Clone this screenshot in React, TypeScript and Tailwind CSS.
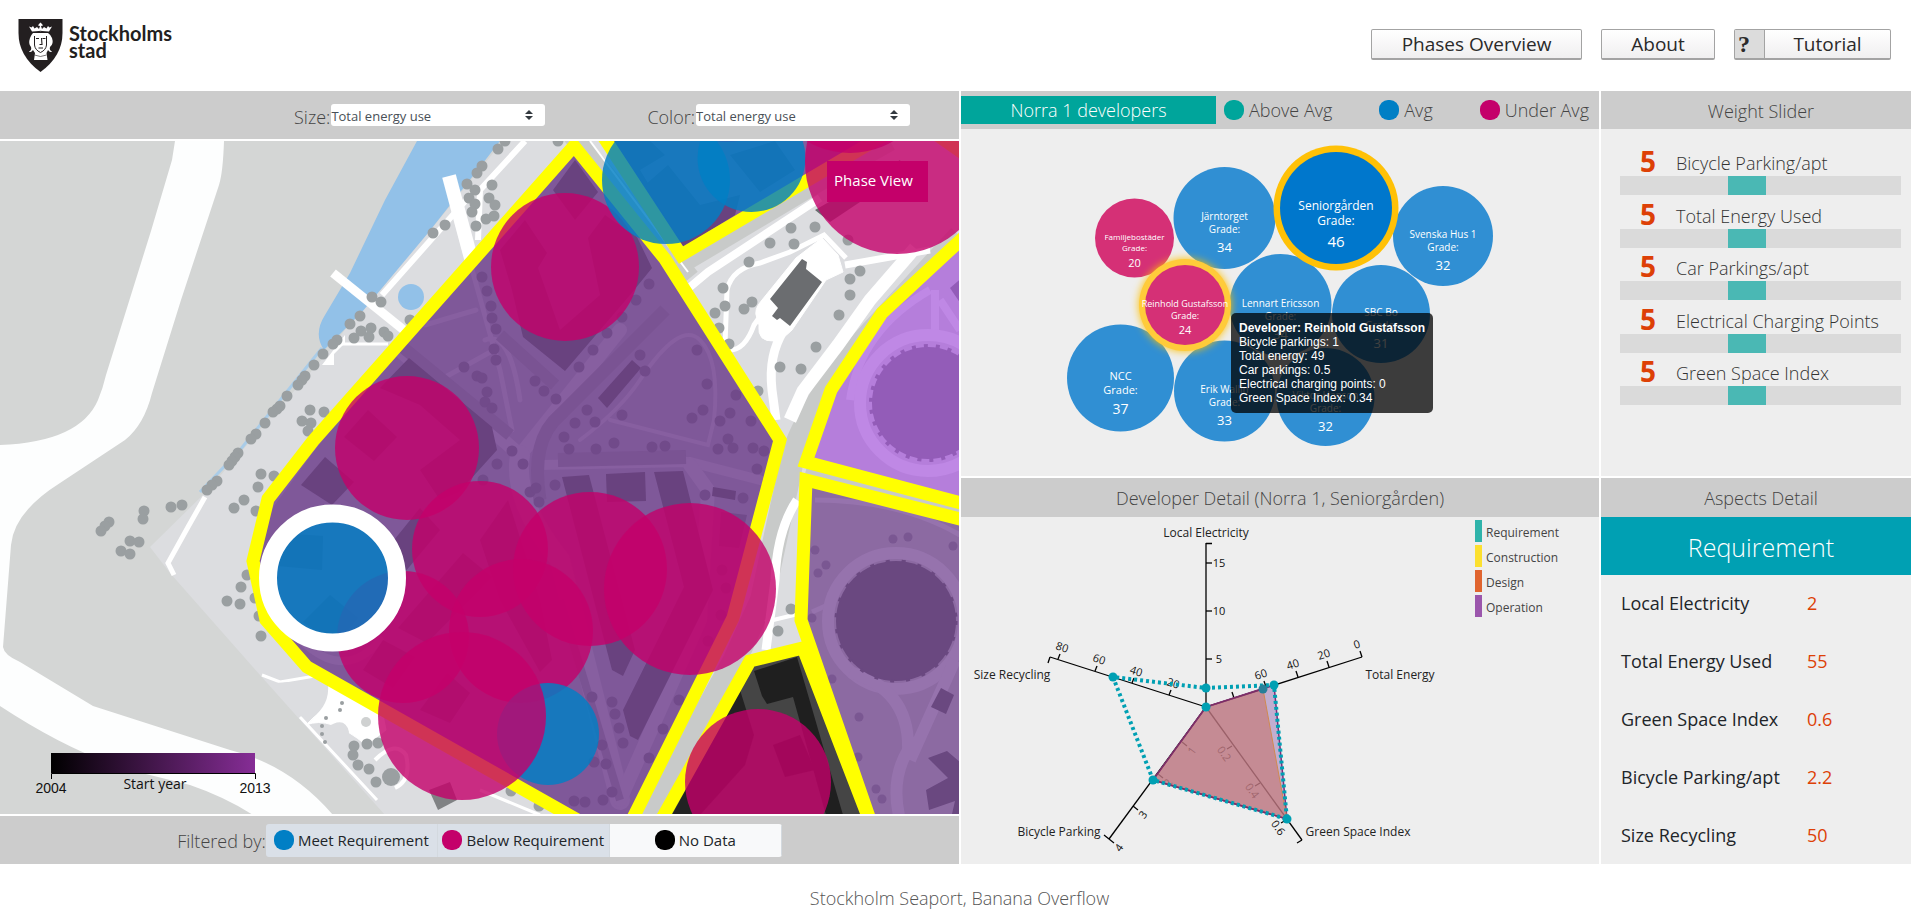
import React from "react";

const FONT = "font-['Open_Sans','Noto_Sans',sans-serif]";

type Circle = { x: number; y: number; r: number; kind: "meet" | "below" };

const mapCircles: Circle[] = [
  { x: 727, y: 70, r: 72, kind: "below" },
  { x: 565, y: 267, r: 74, kind: "below" },
  { x: 666, y: 180, r: 64, kind: "meet" },
  { x: 751.5, y: 158, r: 54, kind: "meet" },
  { x: 897, y: 162, r: 92, kind: "below" },
  { x: 850, y: 68, r: 85, kind: "below" },
  { x: 407, y: 448, r: 72, kind: "below" },
  { x: 480, y: 549, r: 68, kind: "below" },
  { x: 590, y: 569, r: 77, kind: "below" },
  { x: 690, y: 589, r: 86, kind: "below" },
  { x: 521, y: 631, r: 72, kind: "below" },
  { x: 403, y: 637, r: 66, kind: "below" },
  { x: 548, y: 734, r: 51, kind: "meet" },
  { x: 462, y: 716, r: 84, kind: "below" },
  { x: 758, y: 782, r: 73, kind: "below" },
];

const trees = [
  [505, 141], [558, 141], [498, 149], [482, 166], [477, 173], [467, 184], [475, 190], [469, 198], [475, 204], [472, 212], [492, 185], [489, 198], [495, 205],
  [486, 219], [494, 216], [476, 226], [445, 225], [433, 233], [372, 297], [381, 302], [360, 316], [350, 324], [410, 320], [354, 338], [361, 331], [371, 328],
  [369, 337], [384, 332], [388, 336], [337, 340], [333, 344], [323, 354], [314, 365], [305, 376], [302, 380], [298, 385], [287, 396], [280, 406], [277, 409],
  [273, 412], [265, 423], [256, 434], [251, 439], [238, 453], [235, 457], [232, 461], [229, 465], [217, 481], [212, 485], [207, 490], [310, 410], [324, 412],
  [302, 421], [311, 423], [308, 431], [261, 474], [274, 476], [258, 487], [244, 500], [234, 508], [256, 511], [171, 507], [182, 505], [144, 511], [143, 519],
  [109, 522], [105, 526], [101, 531], [130, 541], [139, 542], [121, 551], [130, 554], [247, 575], [241, 587], [227, 601], [240, 604], [255, 598], [259, 616],
  [261, 636], [354, 746], [353, 755], [358, 765], [369, 769], [367, 744], [378, 743], [376, 782], [511, 791], [539, 806], [791, 228], [815, 227], [770, 243],
  [794, 244], [749, 262], [723, 288], [725, 306], [715, 313], [719, 328], [729, 344], [744, 309], [752, 302], [860, 271], [850, 279], [850, 295], [839, 315],
  [816, 347], [780, 367], [801, 369], [848, 240], [791, 609], [778, 631], [758, 391],
];

const parkTrees = [
  [482, 277], [487, 291], [491, 306], [492, 318], [496, 329], [494, 349], [496, 360], [477, 376], [482, 378], [487, 392], [485, 402], [492, 408], [464, 367],
  [535, 381], [544, 391], [556, 399], [649, 284], [636, 300], [622, 317], [607, 333], [593, 350], [579, 367], [640, 355], [645, 371], [697, 350], [587, 410],
  [575, 423], [595, 422], [564, 437], [569, 449], [596, 449], [614, 443], [622, 415], [652, 447], [665, 446], [512, 451], [497, 464], [523, 464], [483, 480],
  [530, 492], [536, 488], [555, 485], [539, 502], [707, 384], [692, 418], [703, 410], [736, 395], [720, 421], [730, 413], [728, 439], [718, 449], [733, 448],
  [751, 421], [753, 448], [764, 451], [757, 469], [705, 495], [743, 498], [722, 570], [726, 588], [721, 615], [708, 641], [592, 697], [612, 702], [615, 714],
  [619, 728], [623, 743], [679, 700], [663, 729], [649, 758], [602, 745], [594, 762], [606, 764], [612, 792], [603, 800], [585, 802], [574, 801],
];

const eastTrees = [
  [815, 550], [826, 565], [818, 573], [893, 539], [908, 537], [953, 546], [812, 618], [832, 679], [859, 717], [858, 757], [876, 789], [882, 799],
];

const mainArea = "574,146 665,259 780,440 733,618 620,844 307,667 266,620 253,561 268,499 313,441";
const eastLight = "965,236 882,313 831,390 806,462 980,508 980,220";
const eastArea = "806,480 980,524 980,840 877,840 801,620";
const darkArea = "750,661 803,648 877,840 650,840";
const northArea = "586,110 681,255 930,108";

function CityMap() {
  return (
    <svg viewBox="0 141 959 673" className="block w-full" role="img" aria-label="Map of Norra 1">
      <defs>
        <linearGradient id="years" x1="0" x2="1" y1="0" y2="0">
          <stop offset="0" stopColor="#000" />
          <stop offset="1" stopColor="#862d96" />
        </linearGradient>
        <clipPath id="mainClip">
          <polygon points={mainArea} />
        </clipPath>
        <clipPath id="lightClip">
          <polygon points={eastLight} />
        </clipPath>
        <clipPath id="eastClip">
          <polygon points={eastArea} />
        </clipPath>
        <clipPath id="northClip">
          <polygon points={northArea} />
        </clipPath>
      </defs>
      <rect x="0" y="141" width="960" height="674" fill="#d4d6d5" />
      <path
        d="M175 141H224Q223 172 219 185L181 300L152 393Q144 425 125 440L60 483Q14 512 11 545L3 647Q4 655 20 662L93 706L230 750Q290 765 333 815H253Q225 797 190 785L130 770Q70 752 0 706V445Q80 442 98 400Q103 388 106 375L151 231L172 160Z"
        fill="#fdfefe"
      />
      <path d="M503 141L428 233L367 300L330 350L205 493L150 547L170 573L260 675L385 815H960V141Z" fill="#dcdde0" />
      <path d="M417 141H500L480 167L428 233L362 312L324 350Q313 334 325 315L350 273L385 200Z" fill="#92c1e8" />
      <circle cx="411" cy="297" r="13" fill="#92c1e8" />
      <path d="M322 348L240 450L200 492" fill="none" stroke="#a9cce8" strokeWidth="3" />
      <g fill="none" stroke="#fff">
        <path d="M449 176L472 262" strokeWidth="14" />
        <path d="M333 273L405 331" strokeWidth="9" />
        <path d="M525 141L480 190L478 240M475 190L382 295" strokeWidth="6" />
        <path d="M205 497L188 527L168 563L174 575" strokeWidth="5" />
        <path d="M340 344H388" strokeWidth="3" />
        <path d="M345 335L322 365H334V354L345 343Z" fill="#fff" stroke="none" />
        <path d="M262 675L280 682L315 676M300 717L377 800M480 790L540 815" strokeWidth="3" />
        <path d="M318 678Q330 680 340 690L380 700L386 730L366 745Q330 715 306 725Q330 705 326 680Z" fill="#fff" />
        <path d="M375 760Q395 740 406 755Q412 780 395 788" strokeWidth="4" />
      </g>
      <path d="M276 683Q305 680 328 684Q330 705 312 718L300 716ZM326 728Q345 715 349 732L346 748L336 746Z" fill="#dcdde0" />
      <g fill="none" stroke="#c8cac9">
        <path d="M560 120L690 278M684 262L830 175L890 141" strokeWidth="20" />
        <path d="M960 236L850 356Q795 430 790 470L762 600L735 660L645 822" strokeWidth="24" />
        <path d="M806 470L960 511" strokeWidth="8" />
      </g>
      <path d="M590 141L688 272" stroke="#fff" strokeWidth="2" />
      <g fill="none" stroke="#fff">
        <path d="M690 287L708 272L820 198" strokeWidth="8" />
        <path d="M729 352L725 345L727 290Q732 268 760 263L790 252L824 235L846 258" strokeWidth="5" />
        <path d="M730 350Q745 350 754 325L772 300" strokeWidth="5" />
        <path d="M845 265L930 250" strokeWidth="7" />
        <path d="M915 248L870 300L838 345L803 391L790 420" strokeWidth="13" />
        <path d="M784 330Q768 355 772 390L776 420" strokeWidth="9" />
        <path d="M797 500Q777 530 775 580L766 650" strokeWidth="9" />
        <path d="M765 622L798 614" strokeWidth="4" />
        <path d="M796 258L822 238L838 255L843 272L826 280L792 330Q782 340 774 341Q757 342 759 325L757 318Q753 310 762 300Z" fill="#fff" />
      </g>
      <path d="M802 259L807 262L806 269L822 282L790 326L780 318L777 320L772 316L778 308L770 299Z" fill="#6b6d70" />
      <g fill="#9a9fa1">
        {trees.map(([x, y], i) => (
          <circle key={i} cx={x} cy={y} r="5.5" />
        ))}
        <circle cx="391" cy="777" r="9" />
        <circle cx="342" cy="703" r="2" />
        <circle cx="340" cy="710" r="2" />
        <circle cx="326" cy="718" r="2" />
        <circle cx="322" cy="726" r="2" />
        <circle cx="322" cy="734" r="2" />
        <circle cx="325" cy="742" r="2" />
        <circle cx="366" cy="722" r="5" fill="#cfd1d1" />
      </g>
      <polygon points="429,790 450,782 457,800 438,810" fill="#808284" />
      <polygon points="815,210 850,190 900,160 905,172 830,222" fill="#6b6d70" />

      <polygon points={mainArea} fill="#7f5899" />
      <g clipPath="url(#mainClip)">
        <g fill="none" stroke="#875fa0" strokeLinecap="round">
          <path d="M390 342L520 455L620 330" strokeWidth="14" />
          <path d="M470 262L500 370L512 430M485 340Q510 330 520 400M425 325L476 310M440 380L494 350" strokeWidth="5" />
          <path d="M580 440Q620 410 640 380Q680 320 700 340Q720 360 714 420L708 445L610 420" strokeWidth="4" />
          <path d="M520 455Q512 500 560 560L620 800" strokeWidth="20" />
          <path d="M540 465L690 462L760 480" strokeWidth="10" />
          <path d="M690 465L708 490L700 620L620 800" strokeWidth="14" />
          <path d="M270 505L310 450L350 400M262 590Q330 700 380 640" strokeWidth="8" />
        </g>
        <g fill="none" stroke="#7a5393">
          <path d="M400 345L510 435M500 335L555 385" strokeWidth="12" />
          <path d="M665 310L560 415Q530 440 540 500" strokeWidth="13" />
          <path d="M558 460L686 457" strokeWidth="14" />
          <path d="M560 600L620 800" strokeWidth="8" />
        </g>
        <g fill="#69427f">
          <polygon points="575,160 598,192 575,220 553,190" />
          <polygon points="637,237 652,268 630,295 565,371 523,337 512,290 500,250 525,220 547,253 538,268 560,330 600,295 588,238 605,215" />
          <polygon points="409,358 492,427 497,450 459,492 440,500 420,470 460,440 420,405 380,388" />
          <polygon points="368,410 397,437 374,461 344,437" />
          <polygon points="325,457 354,482 332,505 301,485" />
          <polygon points="420,508 440,530 405,572 390,545" />
          <polygon points="632,360 641,368 607,408 598,398" />
          <polygon points="562,477 589,475 635,650 623,676 612,670" />
          <polygon points="606,474 645,472 646,501 607,502" />
          <polygon points="654,472 683,471 713,590 638,740 630,736 623,710 684,587" />
          <polygon points="713,487 736,491 735,500 712,496" />
          <polygon points="463,553 492,577 427,643 398,628" />
          <polygon points="383,640 415,657 393,688 363,670" />
          <polygon points="447,673 470,693 450,723 420,710" />
          <polygon points="508,500 540,600 552,660 540,672 500,600 480,540" />
          <polygon points="278,533 323,536 322,570 278,566" />
          <polygon points="330,595 358,618 335,645 303,622" />
        </g>
        <g fill="#714a8a">
          <polygon points="721,512 747,515 739,548 719,546" />
          {parkTrees.map(([x, y], i) => (
            <circle key={i} cx={x} cy={y} r="5.5" />
          ))}
        </g>
      </g>

      <polygon points={northArea} fill="#855c9d" />
      <g clipPath="url(#northClip)" fill="#69427f">
        <polygon points="610,141 650,141 665,155 640,170 655,195 690,250 683,246 620,150" />
        <polygon points="668,165 700,205 740,195 735,215 684,247 645,185" />
        <polygon points="730,155 775,141 795,170 760,192" />
      </g>

      <polygon points={eastLight} fill="#b57edb" />
      <g clipPath="url(#lightClip)">
        <path d="M935 290V360M940 300L960 330M850 400Q860 330 930 290" fill="none" stroke="#bf88e5" strokeWidth="8" />
        <circle cx="928" cy="403" r="68" fill="#b57edb" stroke="#bf88e5" strokeWidth="12" />
        <circle cx="928" cy="403" r="56" fill="#935cb8" />
        <circle cx="928" cy="403" r="57" fill="none" stroke="#935cb8" strokeWidth="4" strokeDasharray="4 8" />
        <polygon points="950,288 965,275 965,310" fill="#935cb8" />
      </g>

      <polygon points={eastArea} fill="#8c6aa2" />
      <g clipPath="url(#eastClip)">
        <path d="M815 500Q900 500 960 535M812 612L830 604" fill="none" stroke="#9673ad" strokeWidth="5" />
        <circle cx="896" cy="621" r="68" fill="none" stroke="#9673ad" strokeWidth="12" />
        <path d="M850 672Q910 690 908 750Q890 780 900 820M955 660L910 760" fill="none" stroke="#9673ad" strokeWidth="12" />
        <circle cx="896" cy="621" r="60" fill="#6a4880" />
        <circle cx="896" cy="621" r="60" fill="none" stroke="#6a4880" strokeWidth="3" strokeDasharray="4 12" />
        <g fill="#6a4880">
          <polygon points="941,688 954,695 946,714 931,707" />
          <polygon points="928,758 947,751 960,762 960,814 952,814 955,801 929,810 926,790 948,778" />
        </g>
        <g fill="#7a5792">
          {eastTrees.map(([x, y], i) => (
            <circle key={i} cx={x} cy={y} r="4.5" />
          ))}
        </g>
      </g>

      <polygon points={darkArea} fill="#454545" />
      <polygon points="754,671 797,657 843,815 826,815 793,697 767,704 762,696" fill="#1f1f1f" />
      <polygon points="740,690 754,735 745,765 700,815 672,815" fill="#222" />
      <polygon points="773,745 800,735 815,770 785,777" fill="#222" />

      <g fill="none" stroke="#ff0" strokeWidth="13" strokeMiterlimit="8">
        <polygon points={northArea} />
        <polygon points={eastLight} />
        <polygon points={eastArea} />
        <polygon points={darkArea} />
        <polygon points={mainArea} />
        <path d="M930 130L970 158" />
      </g>

      {mapCircles.map((c, i) => (
        <circle
          key={i}
          cx={c.x}
          cy={c.y}
          r={c.r}
          fill={c.kind === "meet" ? "#007fc5" : "#c4006a"}
          fillOpacity={c.kind === "meet" ? 0.82 : 0.8}
        />
      ))}
      <circle cx="332.5" cy="578" r="64.5" fill="#007fc5" fillOpacity="0.82" stroke="#fff" strokeWidth="18" />

      <rect x="51" y="753" width="204" height="20" fill="url(#years)" />
      <path d="M51.500 779V773.500H255.500V779" fill="none" stroke="#000" />
      <g fontSize="14" textAnchor="middle" fill="#111">
        <text x="51" y="793" className="font-['Liberation_Sans',sans-serif]">2004</text>
        <text x="255" y="793" className="font-['Liberation_Sans',sans-serif]">2013</text>
        <text x="155" y="789">Start year</text>
      </g>
    </svg>
  );
}

type Bubble = { name: string; grade: number; x: number; y: number; r: number; size: number; big: number; under?: boolean; ring?: "solid" | "glow" };

const bubbles: Bubble[] = [
  { name: "Familjebostäder", grade: 20, x: 1134.5, y: 238, r: 39.5, size: 8, big: 11, under: true },
  { name: "Järntorget", grade: 34, x: 1224.5, y: 218, r: 51, size: 10, big: 13 },
  { name: "Svenska Hus 1", grade: 32, x: 1443, y: 236, r: 50, size: 10, big: 13 },
  { name: "Lennart Ericsson", grade: 34, x: 1280.5, y: 305, r: 51, size: 10, big: 13 },
  { name: "SBC Bo", grade: 31, x: 1381, y: 314, r: 49, size: 10, big: 13 },
  { name: "NCC", grade: 37, x: 1120.5, y: 378, r: 53.5, size: 11, big: 14 },
  { name: "Erik Wallin", grade: 33, x: 1224.5, y: 391, r: 50.5, size: 10, big: 13 },
  { name: "Viktor Hanson", grade: 32, x: 1325.5, y: 397, r: 49, size: 10, big: 13 },
  { name: "Reinhold Gustafsson", grade: 24, x: 1185, y: 305, r: 40, size: 9, big: 11, under: true, ring: "glow" },
  { name: "Seniorgården", grade: 46, x: 1336, y: 208, r: 56, size: 12, big: 15, ring: "solid" },
];

function BubbleChart() {
  return (
    <svg viewBox="961 129 638 347" className="block w-full" role="img" aria-label="Developer grades">
      <defs>
        <filter id="glow" x="-30%" y="-30%" width="160%" height="160%">
          <feGaussianBlur stdDeviation="4" />
        </filter>
      </defs>
      {bubbles.map((b) => (
        <g key={b.name} textAnchor="middle" fill="#fff">
          {b.ring === "glow" && <circle cx={b.x} cy={b.y} r="46" fill="#ffc107" filter="url(#glow)" />}
          {b.ring === "glow" && <circle cx={b.x} cy={b.y} r="46" fill="#ffcb3a" />}
          {b.ring === "solid" && <circle cx={b.x} cy={b.y} r="62.5" fill="#ffc107" />}
          <circle cx={b.x} cy={b.y} r={b.r} fill={b.under ? "#d53076" : b.ring ? "#0077cc" : "#308fd3"} />
          <text x={b.x} y={b.y + 2} fontSize={b.size}>{b.name}</text>
          <text x={b.x} y={b.y + 3 + b.size * 1.2} fontSize={b.size}>Grade:</text>
          <text x={b.x} y={b.y + b.big * 2.6} fontSize={b.big}>{b.grade}</text>
        </g>
      ))}
    </svg>
  );
}

type Tick = { x: number; y: number; label?: string };
type Axis = { end: [number, number]; tick: [number, number]; angle: number; off: [number, number]; ticks: Tick[] };

const axes: Axis[] = [
  { end: [1206, 543], tick: [6, 0], angle: 0, off: [13, 4], ticks: [{ x: 1206, y: 563, label: "15" }, { x: 1206, y: 611, label: "10" }, { x: 1206, y: 659, label: "5" }] },
  { end: [1362, 657], tick: [-2, -6], angle: -18, off: [-4, -9], ticks: [{ x: 1362, y: 657, label: "0" }, { x: 1329, y: 667, label: "20" }, { x: 1298, y: 677, label: "40" }, { x: 1266, y: 687, label: "60" }, { x: 1234, y: 698 }] },
  { end: [1302, 840], tick: [-5, 3], angle: 54, off: [-11, 10], ticks: [{ x: 1232, y: 746, label: "0.2" }, { x: 1260, y: 783, label: "0.4" }, { x: 1286, y: 820, label: "0.6" }] },
  { end: [1109, 839], tick: [5, 4], angle: -54, off: [13, 11], ticks: [{ x: 1182, y: 742, label: "1" }, { x: 1158, y: 774, label: "2" }, { x: 1133, y: 806, label: "3" }, { x: 1109, y: 839, label: "4" }] },
  { end: [1050, 657], tick: [2, -5], angle: 18, off: [3, -8], ticks: [{ x: 1058, y: 659, label: "80" }, { x: 1095, y: 671, label: "60" }, { x: 1132, y: 683, label: "40" }, { x: 1169, y: 695, label: "20" }] },
];

const stages = [
  { name: "Requirement", color: "#2fb3aa" },
  { name: "Construction", color: "#fce02f" },
  { name: "Design", color: "#e0652f" },
  { name: "Operation", color: "#9b56ac" },
];

function RadarChart() {
  return (
    <svg viewBox="961 517 638 347" className="block w-full" role="img" aria-label="Developer detail">
      {axes.map((a, i) => (
        <g key={i} stroke="#000" strokeWidth="1.3">
          <line x1="1206" y1="707" x2={a.end[0]} y2={a.end[1]} />
          {a.ticks.map((t, j) => (
            <g key={j}>
              <line x1={t.x} y1={t.y} x2={t.x + a.tick[0]} y2={t.y + a.tick[1]} />
              <text
                transform={`translate(${t.x + a.off[0]} ${t.y + a.off[1]}) rotate(${a.angle})`}
                textAnchor="middle"
                fontSize="11"
                stroke="none"
                fill="#111"
              >
                {t.label}
              </text>
            </g>
          ))}
        </g>
      ))}
      <path d="M1206 543.500H1212M1050 657L1048 663M1302 840L1297 843M1109 839L1104 835" fill="none" stroke="#000" strokeWidth="1.3" />
      <polygon points="1206,707 1274,685 1287,819 1153,780" fill="#a583bd" fillOpacity="0.6" stroke="#7b2d7a" strokeWidth="1.5" />
      <polygon points="1206,707 1263,689 1287,819 1153,780" fill="#c86f62" fillOpacity="0.55" stroke="#d08a50" strokeWidth="1" />
      <polyline points="1263,689 1206,707 1153,780 1287,819" fill="none" stroke="#7b2d6a" strokeWidth="1.5" />
      <polygon points="1206,688 1274,685 1287,819 1153,780 1113,677" fill="none" stroke="#00a0b3" strokeWidth="4" strokeDasharray="3 3" />
      <circle cx="1263" cy="689" r="4.500" fill="#277f99" />
      <g fill="#00a0b3">
        <circle cx="1206" cy="688" r="4.500" />
        <circle cx="1206" cy="707" r="4.500" />
        <circle cx="1274" cy="685" r="4.500" />
        <circle cx="1287" cy="819" r="4.500" />
        <circle cx="1153" cy="780" r="4.500" />
        <circle cx="1113" cy="677" r="4.500" />
      </g>
      <g fontSize="12" textAnchor="middle" fill="#222">
        <text x="1206" y="537">Local Electricity</text>
        <text x="1400" y="679">Total Energy</text>
        <text x="1358" y="836">Green Space Index</text>
        <text x="1059" y="836">Bicycle Parking</text>
        <text x="1012" y="679">Size Recycling</text>
      </g>
      {stages.map((s, i) => (
        <g key={s.name}>
          <rect x="1475" y={520 + i * 25} width="7" height="22" fill={s.color} />
          <text x="1486" y={537 + i * 25} fontSize="12" fill="#444">{s.name}</text>
        </g>
      ))}
    </svg>
  );
}

function Logo() {
  return (
    <a href="#home" className="flex items-start">
      <svg width="45" height="53" viewBox="0 0 45 53" aria-hidden="true">
        <path d="M.5 0H44.500V14Q44.500 37 22.500 53Q.5 37 .5 14Z" fill="#231f20" />
        <g fill="#fff">
          <path d="M15 31Q13 34 11 32.500Q14 31 13 28Q10 25 12 19Q13 16 15 14H30Q33 16 34 19Q36 25 32 28Q31 31 34 32.500Q32 34 30 31L28.500 34L29.500 41H16L17 34Z" />
          <path d="M14 12.500L11 7.500L13.500 8.500L15 7L16.500 9.500L19 8L21 10L22 7L20 6.500L21 5L22.500 3.500L24 5L25 6.500L23 7L24 10L26 8L28.500 9.500L30 7L31.500 8.500L34 7.500L31 12.500Z" />
        </g>
        <g fill="none" stroke="#231f20">
          <path d="M14.500 13.500Q22.500 11 30.500 13.500" strokeWidth="1" />
          <path d="M16.500 17V26Q17 31 22.500 33.500Q28 31 28.500 26V17" strokeWidth="1" />
          <path d="M18 19.500H21M24.500 19.500H27.500M23.500 19L24 25.500H21.500M20.500 29H25" strokeWidth="1.1" />
          <path d="M16.500 36Q22.500 39 28.500 36" strokeWidth=".6" />
        </g>
      </svg>
      <span className="ml-[6px] mt-[6px] font-['Lato',sans-serif] text-[20px] leading-[17px] font-bold text-[#231f20]">
        Stockholms
        <br />
        stad
      </span>
    </a>
  );
}

function MetricSelect({ id, label }: { id: string; label: string }) {
  return (
    <div className="flex items-center">
      <label htmlFor={id} className="pt-1 text-[18px] leading-6 font-light text-[#444]">{label}</label>
      <div className="relative ml-px">
        <select id={id} className="block h-[22px] w-[214px] appearance-none rounded-[3px] bg-white pt-[3px] text-[13px] leading-[18px] text-[#495057]">
          <option>Total energy use</option>
          <option>Bicycle parking</option>
          <option>Green space index</option>
        </select>
        <svg className="pointer-events-none absolute top-[6px] right-[12px]" width="8" height="10" viewBox="0 0 8 10" aria-hidden="true">
          <path d="M0 4L4 0L8 4ZM0 6H8L4 10Z" fill="#343a40" />
        </svg>
      </div>
    </div>
  );
}

const Dot = ({ color }: { color: string }) => <span className={`h-5 w-5 shrink-0 rounded-[9px] ${color}`} />;

const filters = [
  { name: "Meet Requirement", dot: "bg-[#007fc5]", style: "bg-[#dae0e8]" },
  { name: "Below Requirement", dot: "bg-[#c4006a]", style: "bg-[#dae0e8]" },
  { name: "No Data", dot: "bg-black", style: "bg-[#f8f9fa]" },
];

const grades = [
  { name: "Above Avg", dot: "bg-[#00a59b]" },
  { name: "Avg", dot: "bg-[#007fc5]" },
  { name: "Under Avg", dot: "bg-[#c4006a]" },
];

const weights = ["Bicycle Parking/apt", "Total Energy Used", "Car Parkings/apt", "Electrical Charging Points", "Green Space Index"];

const aspects = [
  ["Local Electricity", "2"],
  ["Total Energy Used", "55"],
  ["Green Space Index", "0.6"],
  ["Bicycle Parking/apt", "2.2"],
  ["Size Recycling", "50"],
];

const BTN =
  "flex h-[31px] items-center justify-center rounded-[2px] border border-b-2 border-[#a3a3a3] bg-gradient-to-b from-white to-[#f0eff0] text-[19px] leading-6 font-medium text-[#2a2a2a]";

const HEAD = "flex items-center justify-center bg-[#ccc] pt-[2px] text-[18px] font-light text-[#444]";

export default function App() {
  return (
    <div className={`min-h-screen bg-white ${FONT}`}>
      <header className="flex h-[91px] items-start justify-between pl-[18px] pr-5">
        <div className="pt-[19px]">
          <Logo />
        </div>
        <nav className="flex gap-[19px] pt-[29px]">
          <button className={`${BTN} w-[211px]`}>Phases Overview</button>
          <button className={`${BTN} w-[114px]`}>About</button>
          <button className={`${BTN} w-[157px]`}>
            <span className="flex h-full w-[30px] items-center border-r border-[#a3a3a3] bg-[#dcdcdc] pl-[3px] font-['Liberation_Serif',serif] text-[24px] font-bold">?</span>
            <span className="flex-1">Tutorial</span>
          </button>
        </nav>
      </header>

      <main className="grid grid-cols-[959fr_638fr_310fr] gap-[2px]">
        <section className="flex flex-col gap-[2px]">
          <div className="flex h-12 items-center gap-[102px] bg-[#ccc] pb-px pl-[294px]">
            <MetricSelect id="size" label="Size:" />
            <MetricSelect id="color" label="Color:" />
          </div>
          <div className="relative">
            <CityMap />
            <button className="absolute top-5 right-[31px] h-[41px] w-[101px] bg-[#c4006a] pr-2 pb-[2px] text-[15px] text-white">Phase View</button>
          </div>
          <div className="flex h-12 items-center justify-center bg-[#ccc]">
            <span className="pt-[2px] text-[18px] font-light text-[#444]">Filtered by:</span>
            <div className="flex overflow-hidden rounded-[3px]">
              {filters.map((f) => (
                <button key={f.name} className={`flex h-[33px] w-[172px] items-center justify-center gap-[4px] border-r border-[#d3d9df] text-[15px] text-[#212529] ${f.style}`}>
                  <Dot color={f.dot} />
                  {f.name}
                </button>
              ))}
            </div>
          </div>
        </section>

        <section className="flex flex-col gap-[2px]">
          <div className="relative bg-[#eee]">
            <div className="flex h-[38px] items-center bg-[#ccc] text-[18px] font-light">
              <h2 className="flex h-7 w-[255px] items-center justify-center bg-[#00a59b] text-white">Norra 1 developers</h2>
              <ul className="flex flex-1 items-center justify-between pr-[10px] pl-2 text-[#444]">
                {grades.map((g) => (
                  <li key={g.name} className="flex items-center gap-[5px]">
                    <Dot color={g.dot} />
                    {g.name}
                  </li>
                ))}
              </ul>
            </div>
            <BubbleChart />
            <div role="tooltip" className="absolute top-[222px] left-[270px] rounded-[5px] bg-black/75 p-2 font-['Liberation_Sans',sans-serif] text-[12px] leading-[14px] whitespace-nowrap text-white">
              <strong>Developer: Reinhold Gustafsson</strong>
              <p>Bicycle parkings: 1</p>
              <p>Total energy: 49</p>
              <p>Car parkings: 0.5</p>
              <p>Electrical charging points: 0</p>
              <p>Green Space Index: 0.34</p>
            </div>
          </div>
          <div className="flex-1 bg-[#eee]">
            <h2 className={`${HEAD} h-[39px]`}>Developer Detail (Norra 1, Seniorgården)</h2>
            <RadarChart />
          </div>
        </section>

        <section className="grid grid-rows-[385fr_386fr] gap-[2px]">
          <div className="bg-[#eee]">
            <h2 className={`${HEAD} h-[38px] pl-[10px]`}>Weight Slider</h2>
            <div className="mt-[14px] flex h-[262px] flex-col justify-between pr-[10px] pl-[19px]">
              {weights.map((w, i) => (
                <div key={w}>
                  <div className="flex h-[33px] items-center pl-[20px]">
                    <output htmlFor={`weight-${i}`} className="w-[36px] pt-1 text-[28px] leading-[29px] font-bold text-[#dd4006]">5</output>
                    <label htmlFor={`weight-${i}`} className="pt-[7px] text-[18px] leading-[26px] font-light whitespace-nowrap text-[#333]">{w}</label>
                  </div>
                  <input
                    id={`weight-${i}`}
                    type="range"
                    min={1}
                    max={10}
                    defaultValue={5}
                    className="block h-[19px] w-full appearance-none bg-[#dadada] [&::-webkit-slider-thumb]:h-[19px] [&::-webkit-slider-thumb]:w-[38px] [&::-webkit-slider-thumb]:appearance-none [&::-webkit-slider-thumb]:bg-[#4ab8b4]"
                  />
                </div>
              ))}
            </div>
          </div>
          <div className="flex flex-col bg-[#eee]">
            <h2 className={`${HEAD} h-[39px] pl-[10px]`}>Aspects Detail</h2>
            <h3 className="flex h-[58px] items-center justify-center bg-[#00a0b3] pt-1 pl-[10px] text-[25px] font-light text-white">Requirement</h3>
            <table className="flex flex-1 flex-col text-[18px]">
              <tbody className="flex flex-1 flex-col">
                {aspects.map(([name, value]) => (
                  <tr key={name} className="flex flex-1 items-center">
                    <th scope="row" className="w-[206px] pl-5 text-left font-normal text-[#212529]">{name}</th>
                    <td className="text-[#dd4006]">{value}</td>
                  </tr>
                ))}
              </tbody>
            </table>
          </div>
        </section>
      </main>

      <footer className="pt-[22px] pl-[8px] text-center text-[18px] leading-6 font-light text-[#555]">Stockholm Seaport, Banana Overflow</footer>
    </div>
  );
}
